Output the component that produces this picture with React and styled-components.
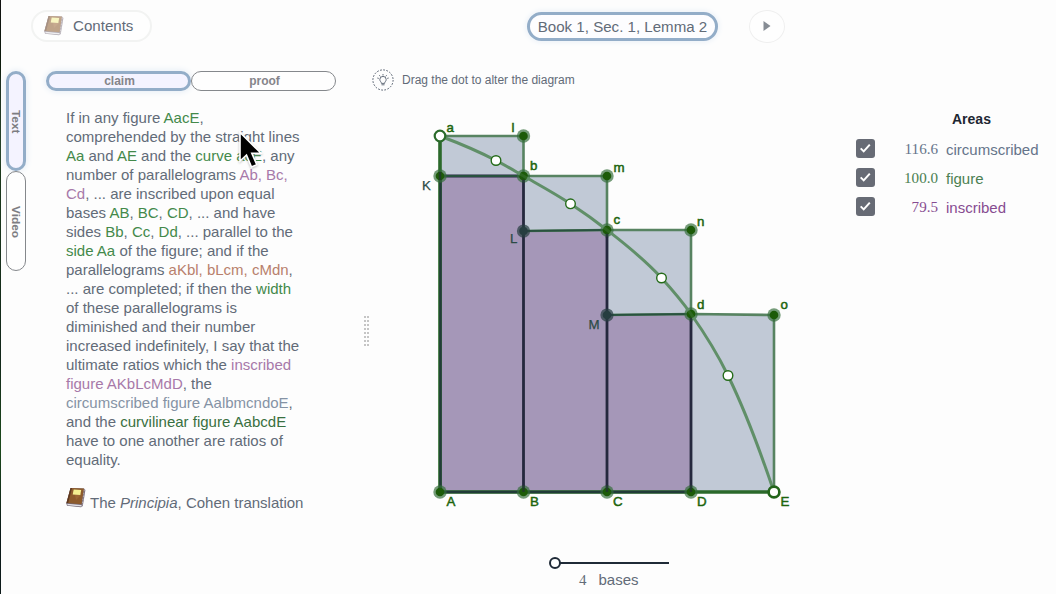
import React from "react";
import styled, { createGlobalStyle, css } from "styled-components";

const GlobalStyle = createGlobalStyle`
  *, *::before, *::after { box-sizing: border-box; }
  html, body { margin: 0; padding: 0; overflow: hidden; background: #fdfdfd; }
  body { font-family: "Liberation Sans", Arial, sans-serif; }
`;

const Page = styled.div`
  position: relative;
  display: flex;
  flex-direction: column;
  width: 1056px;
  height: 594px;
  padding-left: 6px;
  background:
    linear-gradient(#111, #0d1a0d 10%, #1c3a1c 25%, #12261a 60%, #1c4a1c 75%, #0d1a1a 90%) 0 0 / 1px 100% no-repeat,
    #fdfdfd;
  color: #626b78;
`;

const Header = styled.header`
  display: flex;
  align-items: center;
  height: 52px;
  padding-left: 25px;
`;

const ContentsButton = styled.button`
  display: flex;
  align-items: center;
  gap: 9px;
  width: 121px;
  height: 32px;
  margin: 0 375px 1px 0;
  padding: 0 0 1px 11px;
  border: 2px solid #f2f3f2;
  border-radius: 16px;
  background: #fefefe;
  color: #626b78;
  font: 15.1px "Liberation Sans", Arial, sans-serif;
  svg { opacity: 0.55; }
`;

const LocationPill = styled.div`
  width: 191px;
  height: 29px;
  margin: 0 31px 0 0;
  border: 3px solid #93adc8;
  border-radius: 15px;
  background: #fdfdff;
  box-shadow: 0 0 6px #e3ecf6;
  font-size: 15.1px;
  line-height: 23px;
  text-align: center;
  white-space: nowrap;
`;

const NextButton = styled.button`
  display: flex;
  align-items: center;
  justify-content: center;
  width: 36px;
  height: 33px;
  padding: 0 1px 0 0;
  border: 1.5px solid #efefef;
  border-radius: 50%;
  background: #fefefe;
`;

const Body = styled.main`
  display: flex;
  height: 542px;
`;

const Rail = styled.nav`
  display: flex;
  flex: none;
  flex-direction: column;
  width: 20px;
  margin-right: 20px;
  padding-top: 19px;
`;

const active = css`
  border: 3px solid #93adc8;
  background: #f4f3ff;
  box-shadow: 0 0 7px #dfe9f4;
`;

const RailTab = styled.button`
  width: 20px;
  height: 100px;
  padding: 2px 0 0;
  border: 1px solid #85888c;
  border-radius: 10px;
  background: #fefefe;
  color: #7d7d82;
  font: bold 11.8px "Liberation Sans", Arial, sans-serif;
  writing-mode: vertical-rl;
  text-align: center;
  ${(p) => p.$active && active}
`;

const TextPane = styled.section`
  flex: none;
  width: 290px;
`;

const TabRow = styled.div`
  display: flex;
  padding-top: 19px;
`;

const Tab = styled.button`
  width: 145px;
  height: 20px;
  padding: 0 0 0 2px;
  border: 1px solid #85888c;
  border-radius: 10px;
  background: #fefefe;
  color: #85858a;
  font: bold 12px/14px "Liberation Sans", Arial, sans-serif;
  ${(p) => p.$active && active}
`;

const Claim = styled.p`
  margin: 17px 0 0 20px;
  font-size: 15px;
  line-height: 19px;
  white-space: nowrap;
`;

const inks = {
  green: "#43894a",
  deep: "#397040",
  purple: "#a779a9",
  rust: "#b8806c",
  slate: "#8593a5",
};

const Term = styled.span`
  color: ${(p) => inks[p.$ink]};
`;

const Source = styled.div`
  display: flex;
  align-items: flex-start;
  gap: 4px;
  margin: 18px 0 0 20px;
  font-size: 15px;
  line-height: 19px;
  white-space: nowrap;
`;

const SourceText = styled.span`
  padding-top: 6px;
`;

const Splitter = styled.div`
  display: grid;
  flex: none;
  grid-template-columns: 2px 2px;
  grid-auto-rows: 2px;
  gap: 2px 1px;
  align-content: start;
  width: 6px;
  margin-left: 28px;
  padding-top: 264px;
`;

const Grip = styled.i`
  background: #c5c5c5;
`;

const DiagramPane = styled.section`
  display: flex;
  flex: none;
  flex-direction: column;
  width: 450px;
`;

const Hint = styled.div`
  display: flex;
  align-items: center;
  gap: 8px;
  height: 24px;
  margin: 16px 0 0 2px;
  font-size: 12px;
`;

const Figure = styled.svg`
  display: block;
  margin-top: 18px;
  flex: none;
`;

const SliderBlock = styled.div`
  display: flex;
  flex-direction: column;
  margin: 34px 0 0 178px;
`;

const SliderLabel = styled.div`
  display: flex;
  gap: 12px;
  margin: 0 0 0 31px;
  font-size: 15px;
  line-height: 20px;
`;

const Count = styled.span`
  font-family: "Liberation Serif", serif;
`;

const Legend = styled.aside`
  flex: none;
  width: 200px;
  margin-left: 35px;
  padding-top: 59px;
`;

const LegendTitle = styled.h2`
  margin: 0 0 11px 97px;
  color: #1d2733;
  font-size: 14px;
  line-height: 16px;
`;

const LegendRow = styled.label`
  display: flex;
  align-items: flex-start;
  height: 29px;
  padding-top: 1px;
  color: ${(p) => p.$color};
  font-size: 15px;
  line-height: 20px;
`;

const CheckBox = styled.span`
  display: flex;
  flex: none;
  width: 19px;
  height: 19px;
  margin-left: 1px;
  border-radius: 3px;
  background: #676b75;
`;

const Value = styled.span`
  flex: none;
  width: 63px;
  margin-right: 8px;
  padding-top: 1px;
  font: 15.1px/19px "Liberation Serif", serif;
  text-align: right;
`;

const AreaName = styled.span`
  padding-top: 1px;
`;

const Pointer = styled.svg`
  position: absolute;
  left: 236px;
  top: 130px;
`;

const BookIcon = () => (
  <svg width="20" height="21" viewBox="0 0 20 21">
    <path d="M4.5 1 18 1.4 19.4 3 16.8 19 15 20.3 1 18.8.3 16.3Z" fill="#716675" />
    <path d="m1.2 16.8 14.3 1.2.2 1.5L1.6 18.2Z" fill="#e3e1e6" />
    <path d="M4.6 1 18 1.4 15.5 17.2.5 16Z" fill="#8d5b2d" />
    <path d="M4.6 1 6 1.1 2.2 16.1.5 16Z" fill="#5d3820" />
    <path d="M9 7.5 15.5 7.5 10 13Z" fill="#a16c3b" opacity=".7" />
    <path d="m18.3 2.5-2.1 15.8" stroke="#cac2c3" strokeWidth=".8" strokeDasharray="2 1" />
    <path d="m7.7 2.6 7.5.3-.9 5-7.6-.3Z" fill="#f4ef91" />
  </svg>
);

const BulbIcon = () => (
  <svg width="22" height="22" viewBox="0 0 22 22" fill="none" stroke="#535d6c">
    <circle cx="11" cy="11" r="10.1" strokeWidth="1" strokeDasharray="1.7 1.47" />
    <path d="M9.4 14.4c0-1.6-1.6-2.1-1.6-3.8a3.2 3.2 0 0 1 6.4 0c0 1.7-1.6 2.2-1.6 3.8Z" strokeWidth=".9" />
    <path d="M9.5 15.8h3M11 5V6.5M7.3 6.2l1 1.2M14.7 6.2l-1 1.2M5.3 9l1.5.4M16.7 9l-1.5.4" strokeWidth=".9" />
  </svg>
);

const X = [440, 523.5, 607, 691, 774];
const TOP = [136, 176, 230, 315];
const BASE = 492;
const curvePoints = [
  [440, 136], [496, 160.5], [523.5, 176], [570.5, 203.8], [607, 230],
  [661.5, 278], [691, 314], [728, 375.5], [774, 492],
];
const handles = [1, 3, 5, 7].map((i) => curvePoints[i]);

// Cubic segments whose slopes are averaged from the neighbouring chords.
function smoothPath(pts) {
  const s = pts.slice(1).map((p, i) => (p[1] - pts[i][1]) / (p[0] - pts[i][0]));
  const w = pts.slice(1).map((p, i) => p[0] - pts[i][0]);
  const n = s.length;
  const m = pts.map((_, i) => {
    if (i === 0) return s[0] - (s[1] - s[0]) * 0.5;
    if (i === n) return s[n - 1] + (s[n - 1] - s[n - 2]) * 0.5;
    return (s[i - 1] * w[i] + s[i] * w[i - 1]) / (w[i] + w[i - 1]);
  });
  return pts.slice(1).reduce((d, p, i) => {
    const h = w[i] / 3;
    return `${d} C${pts[i][0] + h} ${pts[i][1] + m[i] * h} ${p[0] - h} ${p[1] - m[i + 1] * h} ${p[0]} ${p[1]}`;
  }, `M${pts[0][0]} ${pts[0][1]}`);
}

const solidDots = [
  [440, 176], [523.5, 136], [523.5, 176], [607, 176], [607, 230], [691, 230],
  [691, 314], [774, 315], [440, 492], [523.5, 492], [607, 492], [691, 492],
];
const darkDots = [[523.5, 231], [607, 315]];

const labels = [
  ["a", 446.5, 132, 1], ["l", 511.5, 132, 1], ["b", 530, 170, 1], ["m", 613.5, 172, 1],
  ["c", 613.5, 224, 1], ["n", 697, 226, 1], ["d", 697, 309, 1], ["o", 780.5, 309, 1],
  ["K", 422, 190, 0], ["L", 510, 243, 0], ["M", 588.5, 329, 0],
  ["A", 446.5, 506, 1], ["B", 530, 506, 1], ["C", 613, 506, 1], ["D", 697, 506, 1], ["E", 780.5, 506, 1],
];

function Diagram() {
  return (
    <Figure width="430" height="412" viewBox="370 110 430 412">
      {[0, 1, 2, 3].map((i) => (
        <rect key={i} x={X[i]} y={TOP[i]} width={X[i + 1] - X[i]} height={BASE - TOP[i]} fill="#c1c9d6" />
      ))}
      {[0, 1, 2].map((i) => (
        <rect key={i} x={X[i]} y={TOP[i + 1]} width={X[i + 1] - X[i]} height={BASE - TOP[i + 1]} fill="#a597b8" />
      ))}
      <g fill="none" stroke="#578361" strokeWidth="2.6">
        <path d="M440 136H523.5V176" />
        <path d="M523.5 176H607V230" />
        <path d="M523.5 231 607 230H691V314" />
        <path d="M607 315 691 314 774 315V492" />
      </g>
      <path d="M440 136V492H774" fill="none" stroke="#2b692b" strokeWidth="3.6" />
      <path d="M440.5 176V492H691" fill="none" stroke="#213c38" strokeWidth="2.4" />
      <path d="M440 176H523.5M523.5 176V492M607 230V492M691 314V492" stroke="#25283e" strokeWidth="2.8" />
      <path d="M440 176H523.5M523.5 231 607 230M607 315 691 314" stroke="#29523f" strokeWidth="1.8" />
      {darkDots.map(([x, y]) => (
        <g key={x} fill="#263d40">
          <circle cx={x} cy={y} r="6.6" opacity=".7" />
          <circle cx={x} cy={y} r="4.3" />
        </g>
      ))}
      {solidDots.map(([x, y], i) => (
        <g key={i}>
          <circle cx={x} cy={y} r="6.7" fill="#346d3a" opacity=".68" />
          <circle cx={x} cy={y} r="4.3" fill="#1c5b08" />
        </g>
      ))}
      <path d="M440 172V180M523.5 176V183M607 230V238M691 314V322M523.5 485V492M607 485V492M691 485V492" stroke="#222d36" strokeWidth="2.5" opacity=".65" />
      <path d={smoothPath(curvePoints)} fill="none" stroke="#608f68" strokeWidth="3" />
      {[[523.5, 176], [607, 230], [691, 314]].map(([x, y]) => (
        <circle key={x} cx={x} cy={y} r="4" fill="#1c5b08" opacity=".75" />
      ))}
      <g fill="#fff" stroke="#246b19" strokeWidth="1.4">
        {handles.map(([x, y]) => <circle key={x} cx={x} cy={y} r="4.8" />)}
      </g>
      <circle cx="440" cy="136" r="5.3" fill="#fff" stroke="#2b6b2b" strokeWidth="2.2" />
      <circle cx="774" cy="492" r="5.4" fill="#fff" stroke="#23651a" strokeWidth="2.7" />
      <g fontSize="13.3" fontFamily="Liberation Sans, Arial, sans-serif">
        {labels.map(([t, x, y, green]) => (
          <text key={t} x={x} y={y} fill={green ? "#1d650d" : "#2b4b45"} stroke={green ? "#1d650d" : "#2b4b45"} strokeWidth={green ? 0.5 : 0.25}>{t}</text>
        ))}
      </g>
    </Figure>
  );
}

const areas = [
  ["116.6", "circumscribed", "#65748a"],
  ["100.0", "figure", "#4b8052"],
  ["79.5", "inscribed", "#874c91"],
];

export default function App() {
  return (
    <Page>
      <GlobalStyle />
      <Header>
        <ContentsButton><BookIcon />Contents</ContentsButton>
        <LocationPill>Book 1, Sec. 1, Lemma 2</LocationPill>
        <NextButton>
          <svg width="8" height="10" viewBox="0 0 8 10"><path d="M.5 0 7.5 5 .5 10Z" fill="#868c94" /></svg>
        </NextButton>
      </Header>
      <Body>
        <Rail>
          <RailTab $active>Text</RailTab>
          <RailTab>Video</RailTab>
        </Rail>
        <TextPane>
          <TabRow>
            <Tab $active>claim</Tab>
            <Tab>proof</Tab>
          </TabRow>
          <Claim>
            If in any figure <Term $ink="green">AacE</Term>,<br />
            comprehended by the straight lines<br />
            <Term $ink="green">Aa</Term> and <Term $ink="green">AE</Term> and the <Term $ink="green">curve acE</Term>, any<br />
            number of parallelograms <Term $ink="purple">Ab, Bc,</Term><br />
            <Term $ink="purple">Cd</Term>, ... are inscribed upon equal<br />
            bases <Term $ink="green">AB</Term>, <Term $ink="green">BC</Term>, <Term $ink="green">CD</Term>, ... and have<br />
            sides <Term $ink="green">Bb</Term>, <Term $ink="green">Cc</Term>, <Term $ink="green">Dd</Term>, ... parallel to the<br />
            <Term $ink="green">side Aa</Term> of the figure; and if the<br />
            parallelograms <Term $ink="rust">aKbl, bLcm, cMdn</Term>,<br />
            ... are completed; if then the <Term $ink="green">width</Term><br />
            of these parallelograms is<br />
            diminished and their number<br />
            increased indefinitely, I say that the<br />
            ultimate ratios which the <Term $ink="purple">inscribed</Term><br />
            <Term $ink="purple">figure AKbLcMdD</Term>, the<br />
            <Term $ink="slate">circumscribed figure AalbmcndoE</Term>,<br />
            and the <Term $ink="deep">curvilinear figure AabcdE</Term><br />
            have to one another are ratios of<br />
            equality.
          </Claim>
          <Source>
            <BookIcon />
            <SourceText>The <em>Principia</em>, Cohen translation</SourceText>
          </Source>
        </TextPane>
        <Splitter>
          {Array.from({ length: 16 }, (_, i) => <Grip key={i} />)}
        </Splitter>
        <DiagramPane>
          <Hint><BulbIcon />Drag the dot to alter the diagram</Hint>
          <Diagram />
          <SliderBlock>
            <svg width="124" height="14" viewBox="0 0 124 14">
              <path d="M12 7H121" stroke="#1f2a37" strokeWidth="2" />
              <circle cx="7" cy="7" r="5" fill="#fff" stroke="#1f2a37" strokeWidth="2" />
            </svg>
            <SliderLabel><Count>4</Count>bases</SliderLabel>
          </SliderBlock>
        </DiagramPane>
        <Legend>
          <LegendTitle>Areas</LegendTitle>
          {areas.map(([value, name, color]) => (
            <LegendRow key={name} $color={color}>
              <CheckBox>
                <svg width="19" height="19" viewBox="0 0 19 19"><path d="m4.7 9.4 3 3 6.1-6.7" fill="none" stroke="#fff" strokeWidth="2" /></svg>
              </CheckBox>
              <Value>{value}</Value>
              <AreaName>{name}</AreaName>
            </LegendRow>
          ))}
        </Legend>
      </Body>
      <Pointer width="32" height="42" viewBox="0 0 32 42">
        <path d="M4 2.5V31L10.5 25 15.5 37 20.8 34.7 15.8 23.3H25Z" fill="#000" stroke="#fff" strokeWidth="1.6" filter="drop-shadow(0 1px 1px #8888)" />
      </Pointer>
    </Page>
  );
}
